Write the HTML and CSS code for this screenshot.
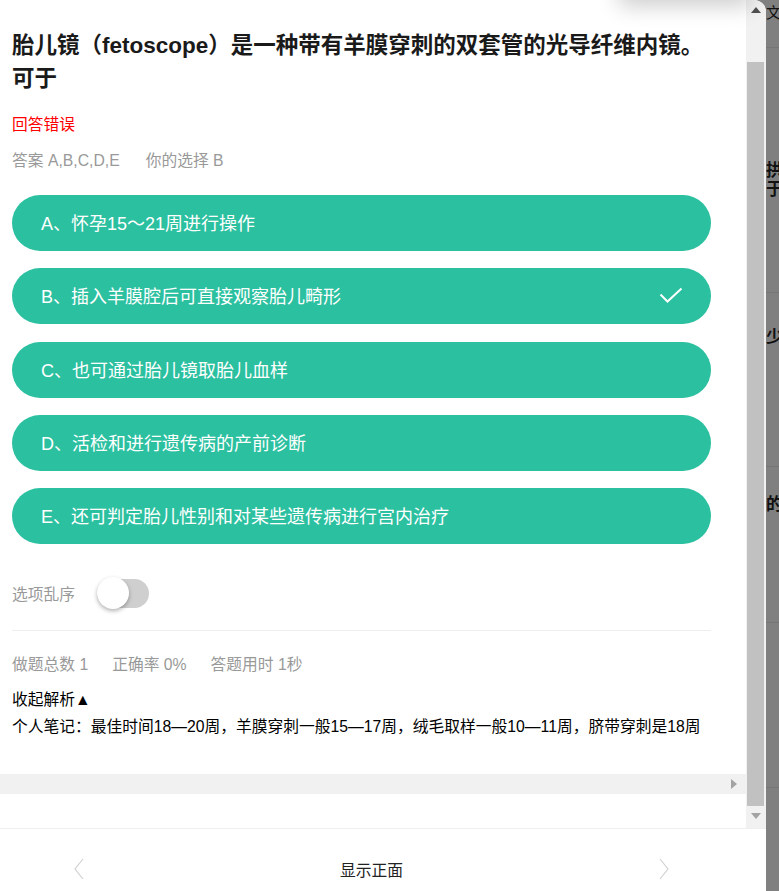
FILE: index.html
```html
<!DOCTYPE html>
<html lang="zh-CN">
<head>
  <meta charset="UTF-8">
  <title>胎儿镜 - 答题解析</title>
  <link rel="stylesheet" href="styles.css">
</head>
<body>
  <div class="page">
    <div class="modal">
      <div class="top-shadow"></div>
      <div class="main">
        <div class="scroll-area">
          <div class="content">
            <h2 class="question">胎儿镜（fetoscope）是一种带有羊膜穿刺的双套管的光导纤维内镜。可于</h2>
            <div class="result">回答错误</div>
            <div class="answer">
              <span>答案 A,B,C,D,E</span>
              <span>你的选择 B</span>
            </div>

            <ul class="options">
              <li class="option">A、怀孕15～21周进行操作</li>
              <li class="option picked">
                <span>B、插入羊膜腔后可直接观察胎儿畸形</span>
                <svg class="check" width="24" height="16" viewBox="0 0 24 16">
                  <polyline points="1.5,7.5 8.5,14.5 22.5,1.5" fill="none" stroke="#fff" stroke-width="2"/>
                </svg>
              </li>
              <li class="option">C、也可通过胎儿镜取胎儿血样</li>
              <li class="option">D、活检和进行遗传病的产前诊断</li>
              <li class="option">E、还可判定胎儿性别和对某些遗传病进行宫内治疗</li>
            </ul>

            <div class="shuffle">
              <span>选项乱序</span>
              <div class="switch"><div class="knob"></div></div>
            </div>

            <div class="stats">
              <span>做题总数 1</span>
              <span>正确率 0%</span>
              <span>答题用时 1秒</span>
            </div>
            <div class="collapse">收起解析▲</div>
            <div class="note">个人笔记：最佳时间18—20周，羊膜穿刺一般15—17周，绒毛取样一般10—11周，脐带穿刺是18周</div>
          </div>
          <div class="hbar">
            <svg width="6" height="10" viewBox="0 0 6 10"><polygon points="0,0 6,5 0,10" fill="#a3a3a3"/></svg>
          </div>
          <div class="hbar-gap"></div>
        </div>
        <div class="vbar">
          <div class="arrow">
            <svg width="10" height="6" viewBox="0 0 10 6"><polygon points="0,6 5,0 10,6" fill="#505050"/></svg>
          </div>
          <div class="thumb"></div>
          <div class="arrow">
            <svg width="10" height="6" viewBox="0 0 10 6"><polygon points="0,0 10,0 5,6" fill="#a3a3a3"/></svg>
          </div>
        </div>
      </div>
      <div class="footer">
        <svg width="10" height="22" viewBox="0 0 10 22"><polyline points="9,1 1,11 9,21" fill="none" stroke="#d0d0d0" stroke-width="1.2"/></svg>
        <span class="flip">显示正面</span>
        <svg width="10" height="22" viewBox="0 0 10 22"><polyline points="1,1 9,11 1,21" fill="none" stroke="#d0d0d0" stroke-width="1.2"/></svg>
      </div>
    </div>

    <div class="behind">
      <div class="behind-head">文进</div>
      <div class="behind-card first"><b>拱进</b><b>于的</b></div>
      <div class="behind-card second"><b>少数</b></div>
      <div class="behind-card third"><b>的成</b></div>
      <div class="behind-card fourth"></div>
      <div class="behind-card"></div>
    </div>
  </div>
</body>
</html>
```

FILE: styles.css
```css
* { box-sizing: border-box; }
body {
  margin: 0;
  font-family: "Liberation Sans", "Noto Sans CJK SC", sans-serif;
  background: #808080;
}
.page {
  display: flex;
  width: 779px;
  height: 891px;
  overflow: hidden;
}
.modal {
  position: relative;
  width: 766px;
  height: 891px;
  flex: none;
  background: #fff;
  border-top-right-radius: 12px;
  overflow: hidden;
  display: flex;
  flex-direction: column;
}
.top-shadow {
  position: absolute;
  top: -40px;
  left: 625px;
  width: 120px;
  height: 40px;
  box-shadow: 0 0 22px 6px rgba(0, 0, 0, 0.2);
}
.main {
  display: flex;
  height: 828px;
  flex: none;
}
.scroll-area {
  width: 746px;
  display: flex;
  flex-direction: column;
}
.content {
  flex: 1;
  padding: 29px 35px 0 12px;
}
.question {
  margin: 0;
  font-size: 22.5px;
  line-height: 33px;
  font-weight: bold;
  color: #1a1a1a;
}
.result {
  margin-top: 18px;
  font-size: 15.75px;
  line-height: 24px;
  color: #ff0000;
}
.answer {
  margin-top: 12px;
  font-size: 15.75px;
  line-height: 24px;
  color: #999;
  display: flex;
  gap: 26px;
}
.options {
  list-style: none;
  margin: 22px 0 0;
  padding: 0;
  display: flex;
  flex-direction: column;
  gap: 17.3px;
}
.option {
  height: 56px;
  border-radius: 28px;
  background: #2bc0a0;
  color: #fff;
  font-size: 18px;
  display: flex;
  align-items: center;
  justify-content: space-between;
  padding: 0 28px 2px 29px;
}
.shuffle {
  margin-top: 33px;
  height: 32px;
  display: flex;
  align-items: center;
  gap: 22px;
  font-size: 15.75px;
  color: #999;
}
.switch {
  position: relative;
  width: 52px;
  height: 29px;
  border-radius: 15px;
  background: #cfcfcf;
}
.knob {
  position: absolute;
  left: 0;
  top: -1.5px;
  width: 32px;
  height: 32px;
  border-radius: 50%;
  background: #fff;
  box-shadow: 0 2px 4px rgba(0, 0, 0, 0.3);
}
.stats {
  margin-top: 21px;
  padding-top: 22px;
  border-top: 1px solid #eee;
  display: flex;
  gap: 24px;
  font-size: 15.75px;
  line-height: 24px;
  color: #999;
}
.collapse {
  margin-top: 11px;
  font-size: 15.75px;
  line-height: 24px;
  color: #000;
}
.note {
  margin-top: 3px;
  font-size: 15.75px;
  line-height: 24px;
  color: #000;
  white-space: nowrap;
}
.hbar {
  height: 20px;
  flex: none;
  background: #f1f1f1;
  display: flex;
  align-items: center;
  justify-content: flex-end;
  padding-right: 9px;
}
.hbar-gap {
  height: 34px;
  flex: none;
}
.vbar {
  width: 20px;
  background: #f1f1f1;
  display: flex;
  flex-direction: column;
  align-items: center;
  padding-bottom: 2px;
}
.vbar .arrow {
  height: 20px;
  width: 100%;
  display: flex;
  align-items: center;
  justify-content: center;
}
.thumb {
  width: 17px;
  margin: 42px 0 0 -2px;
  flex: 1;
  background: #c1c1c1;
}
.footer {
  flex: 1;
  border-top: 1px solid #eee;
  display: flex;
  align-items: center;
  justify-content: space-between;
  padding: 18px 97px 0 74px;
}
.flip {
  font-size: 15.75px;
  color: #222;
}
.behind {
  flex: 1;
  overflow: hidden;
  display: flex;
  flex-direction: column;
  color: #111;
  white-space: nowrap;
}
.behind-head {
  height: 48px;
  padding-top: 1px;
  font-size: 15px;
  border-bottom: 1px solid #767676;
  flex: none;
}
.behind-card {
  height: 166px;
  flex: none;
  border-bottom: 1px solid #767676;
  font-size: 17px;
  line-height: 19px;
  display: flex;
  flex-direction: column;
}
.behind-card.first {
  height: 245px;
  padding-top: 113px;
}
.behind-card.second {
  height: 174px;
  padding-top: 35px;
}
.behind-card.third {
  height: 156px;
  padding-top: 28px;
}
.behind-card.fourth {
  height: 165px;
}
```
